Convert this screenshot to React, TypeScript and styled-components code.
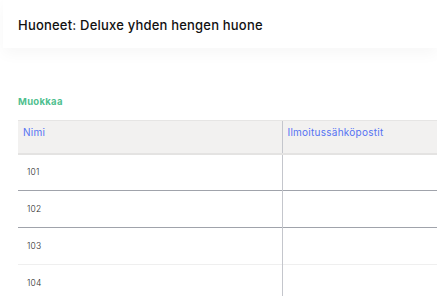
import React from 'react';
import styled, { createGlobalStyle } from 'styled-components';

const GlobalStyle = createGlobalStyle`
  html, body {
    margin: 0;
    padding: 0;
    background: #fff;
    font-family: Inter, 'Open Sans', 'Liberation Sans', sans-serif;
    overflow: hidden;
  }
`;

const Page = styled.div`
  width: 437px;
  height: 296px;
  overflow: hidden;
  background: #fff;
`;

const Header = styled.div`
  height: 48px;
  display: flex;
  align-items: center;
  padding: 2px 0 0 15px;
  box-sizing: border-box;
  margin-left: 3px;
  background: #fff;
  box-shadow: 0 6px 14px rgba(0, 0, 0, 0.035);
`;

const Title = styled.h1`
  margin: 0;
  font-size: 13px;
  font-weight: 500;
  color: #111;
  letter-spacing: 0.2px;
`;

const Content = styled.div`
  padding: 48px 0 0 18px;
`;

const EditLabel = styled.div`
  font-size: 9.5px;
  font-weight: 700;
  color: #4fbf8f;
  line-height: 12px;
  letter-spacing: 0.3px;
  margin-bottom: 12px;
`;

const Table = styled.table`
  border-collapse: collapse;
  table-layout: fixed;
  width: 560px;
`;

const HeadCell = styled.th<{ $width?: number; $divider?: boolean }>`
  width: ${p => (p.$width ? `${p.$width}px` : 'auto')};
  box-sizing: border-box;
  height: 33px;
  padding: 5px 5px 0;
  vertical-align: top;
  text-align: left;
  background: #f2f1f0;
  border-top: 1px solid #e6e5e4;
  border-bottom: 2px solid #e4e3e2;
  border-left: ${p => (p.$divider ? '1px solid #c4c6cc' : 'none')};
  font-size: 10px;
  font-weight: 400;
  color: #5573f3;
  line-height: 12px;
  letter-spacing: 0.25px;
`;

const Row = styled.tr<{ $soft?: boolean }>`
  height: 37px;
  border-bottom: 1px solid ${p => (p.$soft ? '#efefef' : '#a0a3ab')};
`;

const Cell = styled.td<{ $divider?: boolean }>`
  padding: 0 9px;
  font-size: 8.5px;
  font-weight: 300;
  color: #2a2a2a;
  letter-spacing: 0.2px;
  border-left: ${p => (p.$divider ? '1px solid #c4c6cc' : 'none')};
`;

const rooms = ['101', '102', '103', '104'];

export default function App() {
  return (
    <Page>
      <GlobalStyle />
      <Header>
        <Title>Huoneet: Deluxe yhden hengen huone</Title>
      </Header>
      <Content>
        <EditLabel>Muokkaa</EditLabel>
        <Table>
          <thead>
            <tr>
              <HeadCell $width={264}>Nimi</HeadCell>
              <HeadCell $divider>Ilmoitussähköpostit</HeadCell>
            </tr>
          </thead>
          <tbody>
            {rooms.map((r, i) => (
              <Row key={r} $soft={i >= 2}>
                <Cell>{r}</Cell>
                <Cell $divider />
              </Row>
            ))}
          </tbody>
        </Table>
      </Content>
    </Page>
  );
}
